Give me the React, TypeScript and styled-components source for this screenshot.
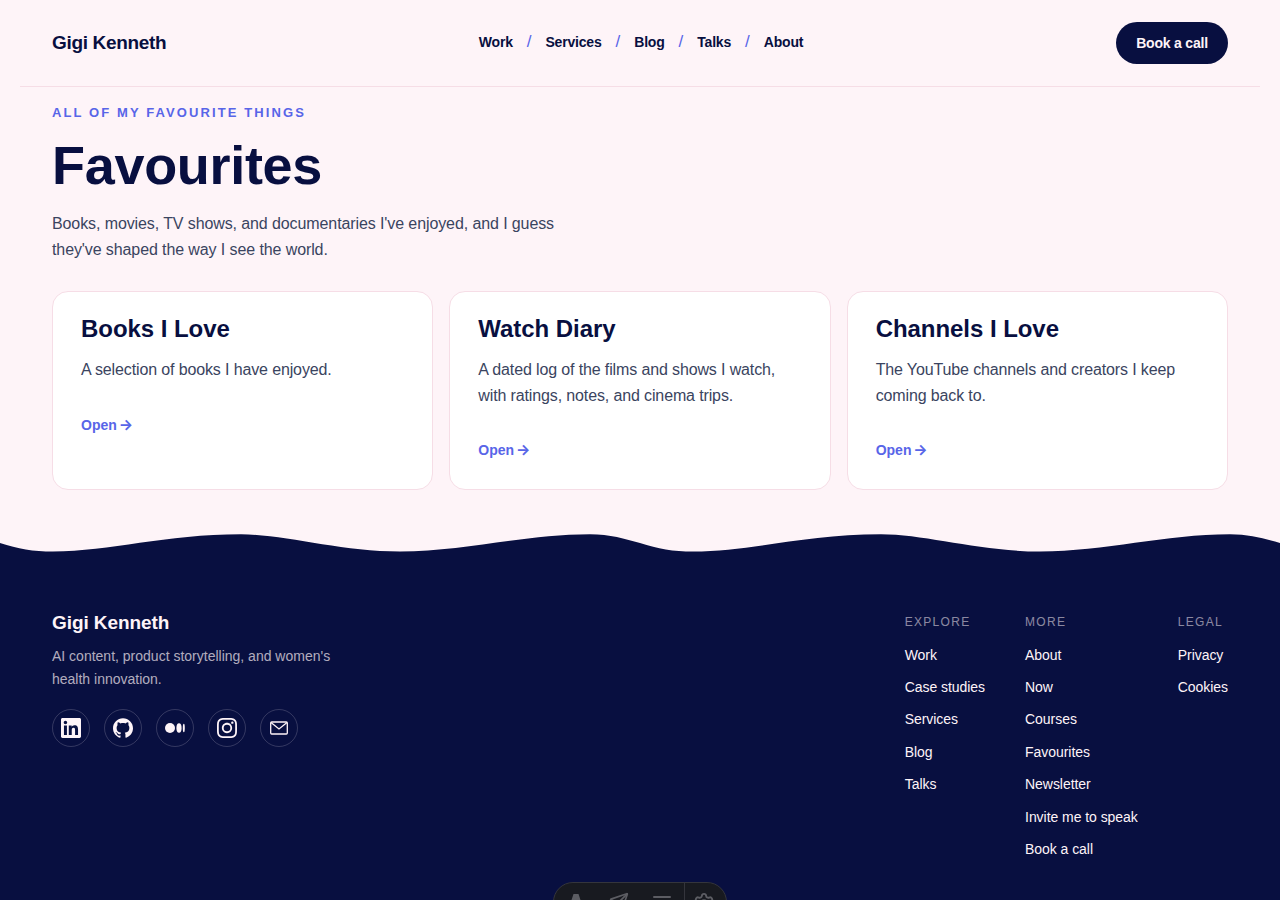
import React from 'react'
import styled, {createGlobalStyle} from 'styled-components'
import {SiLinkedin, SiGithub, SiInstagram} from 'react-icons/si'
import {Settings, Menu, Send} from 'lucide-react'

const navy = '#080f40'
const blush = '#fef4f8'
const accent = '#5865e8'
const line = '#f6dde6'
const slate = '#3a4460'
const fontStack = '"Liberation Sans", Arial, sans-serif'

const navLinks = ['Work', 'Services', 'Blog', 'Talks', 'About']

const cards = [
  {title: 'Books I Love', text: 'A selection of books I have enjoyed.'},
  {
    title: 'Watch Diary',
    text: 'A dated log of the films and shows I watch, with ratings, notes, and cinema trips.'
  },
  {
    title: 'Channels I Love',
    text: 'The YouTube channels and creators I keep coming back to.'
  }
]

const footerColumns = [
  {title: 'Explore', links: ['Work', 'Case studies', 'Services', 'Blog', 'Talks']},
  {
    title: 'More',
    links: ['About', 'Now', 'Courses', 'Favourites', 'Newsletter', 'Invite me to speak', 'Book a call']
  },
  {title: 'Legal', links: ['Privacy', 'Cookies']}
]

export default function App() {
  return (
    <>
      <GlobalStyle />
      <Header>
        <Logo href="#">Gigi Kenneth</Logo>
        <Nav>
          {navLinks.map((link, i) => (
            <React.Fragment key={link}>
              {i > 0 && <Slash>/</Slash>}
              <NavLink href="#">{link}</NavLink>
            </React.Fragment>
          ))}
        </Nav>
        <BookButton href="#">Book a call</BookButton>
      </Header>

      <Main>
        <Eyebrow>All of my favourite things</Eyebrow>
        <Title>Favourites</Title>
        <Intro>
          Books, movies, TV shows, and documentaries I've enjoyed, and I guess they've shaped the
          way I see the world.
        </Intro>
        <CardGrid>
          {cards.map((card) => (
            <Card key={card.title}>
              <CardTitle>{card.title}</CardTitle>
              <CardText>{card.text}</CardText>
              <OpenLink href="#">Open <Arrow>→</Arrow></OpenLink>
            </Card>
          ))}
        </CardGrid>
      </Main>

      <Wave viewBox="0 0 1280 19" preserveAspectRatio="none" aria-hidden="true">
        <path d="M0 9C18 15 33 17.5 53 17.5C110 17.5 165 .3 241 .3C285 .3 340 17.5 400 17.5C465 17.5 525 .3 590 .3C610 .3 625 5 640 9C658 15 673 17.5 693 17.5C750 17.5 805 .3 881 .3C925 .3 980 17.5 1040 17.5C1105 17.5 1165 .3 1230 .3C1250 .3 1265 5 1280 9V19H0Z" />
      </Wave>

      <Footer>
        <Brand>
          <FooterLogo>Gigi Kenneth</FooterLogo>
          <FooterText>AI content, product storytelling, and women's health innovation.</FooterText>
          <Socials>
            <Social href="#" aria-label="LinkedIn"><SiLinkedin size={20} /></Social>
            <Social href="#" aria-label="GitHub"><SiGithub size={20} /></Social>
            <Social href="#" aria-label="Medium">
              <svg width="20" height="20" viewBox="0 0 20 20" fill="currentColor">
                <circle cx="5" cy="10" r="5" />
                <ellipse cx="14" cy="10" rx="2.600" ry="4.700" />
                <ellipse cx="18.800" cy="10" rx="1" ry="4.200" />
              </svg>
            </Social>
            <Social href="#" aria-label="Instagram"><SiInstagram size={20} /></Social>
            <Social href="#" aria-label="Email">
              <svg width="20" height="20" viewBox="0 0 20 20" fill="none" stroke="currentColor" strokeWidth="1.300">
                <rect x="1.700" y="4" width="16.600" height="12" rx="1" />
                <path d="M2 4.500l8 6.500 8-6.500" />
              </svg>
            </Social>
          </Socials>
        </Brand>
        <Columns>
          {footerColumns.map((col) => (
            <Column key={col.title}>
              <ColumnTitle>{col.title}</ColumnTitle>
              {col.links.map((link) => (
                <FooterLink href="#" key={link}>{link}</FooterLink>
              ))}
            </Column>
          ))}
        </Columns>
      </Footer>

      <DevToolbar>
        <ToolItem>
          <svg width="20" height="24" viewBox="0 0 20 24" fill="currentColor">
            <path d="M7.500 2h5l6 18h-4l-1.400-4.500H6.900L5.500 20h-4z" />
          </svg>
        </ToolItem>
        <ToolItem><Send size={20} strokeWidth={2} /></ToolItem>
        <ToolItem><Menu size={24} strokeWidth={2} /></ToolItem>
        <ToolDivider />
        <GearItem><Settings size={22} strokeWidth={2} /></GearItem>
      </DevToolbar>
    </>
  )
}

const GlobalStyle = createGlobalStyle`
  html, body {
    margin: 0;
    background: ${blush};
    font-family: ${fontStack};
    color: ${navy};
  }
  * {
    box-sizing: border-box;
  }
  a {
    text-decoration: none;
    color: inherit;
  }
`

const Header = styled.header`
  margin: 0 20px;
  height: 87px;
  padding: 0 32px;
  display: grid;
  grid-template-columns: 1fr auto 1fr;
  align-items: center;
  border-bottom: 1px solid ${line};
`

const Logo = styled.a`
  font-size: 19px;
  font-weight: 700;
  letter-spacing: -0.33px;
`

const Nav = styled.nav`
  display: flex;
  align-items: center;
  gap: 14px;
  margin-top: -2px;
  padding-left: 2px;
`

const NavLink = styled.a`
  font-size: 14px;
  font-weight: 700;
  letter-spacing: -0.2px;
`

const Slash = styled.span`
  color: ${accent};
  font-size: 17px;
`

const BookButton = styled.a`
  justify-self: end;
  height: 42px;
  width: 112px;
  margin-top: -1px;
  display: flex;
  align-items: center;
  justify-content: center;
  border-radius: 21px;
  background: ${navy};
  color: ${blush};
  font-size: 14px;
  font-weight: 700;
  letter-spacing: -0.2px;
`

const Main = styled.main`
  padding: 18px 52px 44px;
`

const Eyebrow = styled.div`
  font-size: 13px;
  line-height: 16px;
  font-weight: 700;
  letter-spacing: 2.1px;
  text-transform: uppercase;
  color: ${accent};
`

const Title = styled.h1`
  margin: 12px 0 0;
  font-size: 54px;
  line-height: 64px;
  font-weight: 700;
  letter-spacing: -0.3px;
`

const Intro = styled.p`
  margin: 14px 0 0;
  max-width: 520px;
  font-size: 16px;
  line-height: 25.6px;
  letter-spacing: -0.1px;
  color: ${slate};
`

const CardGrid = styled.div`
  margin-top: 29px;
  display: grid;
  grid-template-columns: repeat(3, 1fr);
  gap: 16px;
`

const Card = styled.article`
  height: 199px;
  padding: 22px 28px 0;
  background: #fff;
  border: 1px solid ${line};
  border-radius: 16px;
`

const CardTitle = styled.h2`
  margin: 0;
  font-size: 24px;
  line-height: 30px;
  font-weight: 700;
  letter-spacing: -0.05px;
`

const CardText = styled.p`
  margin: 13px 0 0;
  font-size: 16px;
  line-height: 25.6px;
  letter-spacing: -0.13px;
  color: ${slate};
`

const OpenLink = styled.a`
  display: block;
  margin-top: 33px;
  font-size: 14px;
  line-height: 18px;
  font-weight: 700;
  color: ${accent};
`

const Arrow = styled.span`
  font-family: Inter, sans-serif;
  font-size: 15px;
  margin-left: -2px;
`

const Wave = styled.svg`
  display: block;
  width: 100%;
  height: 19px;
  fill: ${navy};
`

const Footer = styled.footer`
  margin-top: -1px;
  padding: 60px 52px 60px;
  background: ${navy};
  display: flex;
  justify-content: space-between;
  align-items: flex-start;
`

const Brand = styled.div`
  width: 300px;
`

const FooterLogo = styled.div`
  font-size: 19px;
  line-height: 22px;
  font-weight: 700;
  letter-spacing: -0.08px;
  color: ${blush};
`

const FooterText = styled.p`
  margin: 11px 0 0;
  font-size: 14px;
  line-height: 23px;
  color: rgba(254, 243, 247, 0.7);
`

const Socials = styled.div`
  margin-top: 18px;
  display: flex;
  gap: 14px;
`

const Social = styled.a`
  width: 38px;
  height: 38px;
  display: flex;
  align-items: center;
  justify-content: center;
  border-radius: 50%;
  border: 1px solid rgba(254, 243, 247, 0.18);
  color: ${blush};
`

const Columns = styled.div`
  display: flex;
  gap: 40px;
  padding-top: 2px;
`

const Column = styled.div`
  display: flex;
  flex-direction: column;
  gap: 14.4px;
`

const ColumnTitle = styled.div`
  font-size: 12px;
  line-height: 16px;
  letter-spacing: 1.3px;
  text-transform: uppercase;
  color: rgba(254, 243, 247, 0.55);
  margin-bottom: 1px;
`

const FooterLink = styled.a`
  font-size: 14px;
  line-height: 18px;
  letter-spacing: -0.05px;
  color: ${blush};
`

const DevToolbar = styled.div`
  position: fixed;
  left: 553px;
  bottom: -22px;
  width: 174px;
  height: 40px;
  display: flex;
  background: #181a20;
  border: 1px solid #34353c;
  border-radius: 20px;
  color: #5c5d63;
`

const ToolItem = styled.div`
  width: 43.3px;
  display: flex;
  justify-content: center;
  padding-top: 9px;
`

const GearItem = styled(ToolItem)`
  flex: 1;
  width: auto;
  padding-right: 3px;
`

const ToolDivider = styled.div`
  width: 1px;
  background: #34353c;
`
